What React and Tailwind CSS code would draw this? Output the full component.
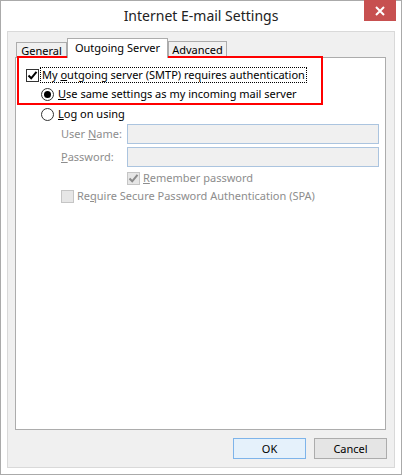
import React from "react";

function Check({ checked, disabled }) {
  return (
    <span
      className={`flex h-[13px] w-[13px] shrink-0 items-center justify-center border ${
        disabled ? "border-[#c5c5c5] bg-[#e6e6e6]" : "border-[#333] bg-white"
      }`}
    >
      {checked && (
        <svg width="11" height="11" viewBox="0 0 11 11">
          <path
            d="M1.5 5.5 L4.2 8.3 L9.5 1.8"
            fill="none"
            stroke={disabled ? "#8a8a8a" : "#000"}
            strokeWidth="2"
          />
        </svg>
      )}
    </span>
  );
}

function Radio({ checked }) {
  return (
    <span className="flex h-[13px] w-[13px] shrink-0 items-center justify-center rounded-full border border-[#333] bg-white">
      {checked && <span className="h-[7px] w-[7px] rounded-full bg-black" />}
    </span>
  );
}

export default function App() {
  return (
    <div className="flex h-[475px] w-[402px] flex-col whitespace-nowrap border border-[#aaaaaa] bg-white font-['Noto_Sans',sans-serif] text-[11px] leading-[16px] text-black">
      {/* title bar */}
      <div className="relative flex h-[30px] shrink-0 items-center justify-center">
        <span className="text-[14px] text-[#222]">Internet E-mail Settings</span>
        <div className="absolute right-[5px] top-[-1px] flex h-[21px] w-[32px] items-center justify-center bg-[#c75050]">
          <svg width="10" height="10" viewBox="0 0 10 10">
            <path d="M1 1 L9 9 M9 1 L1 9" stroke="#fff" strokeWidth="2" />
          </svg>
        </div>
      </div>

      <div className="mx-[6px] mb-[6px] flex flex-1 flex-col border border-[#d9d9d9] bg-[#f0f0f0] pl-[7px] pr-[7px] pt-[6px]">
        {/* tabs */}
        <div className="flex items-end pl-[1px]">
          <div className="h-[15px] w-[51px] border border-b-0 border-[#acacac] bg-[#f0f0f0] text-center leading-[15px]">General</div>
          <div className="relative z-10 -mb-[1px] h-[20px] w-[101px] border border-b-0 border-[#acacac] bg-white text-center leading-[17px]">Outgoing Server</div>
          <div className="h-[16px] w-[59px] border border-b-0 border-[#acacac] bg-[#f0f0f0] text-center leading-[16px]">Advanced</div>
        </div>

        {/* panel */}
        <div className="mr-[1px] flex h-[373px] flex-col border border-[#acacac] bg-white">
          <div className="ml-[1px] -mt-[2px] w-[306px] border-2 border-[#ff0000] pb-[1px] pl-[7px] pt-[9px]">
            <div className="flex h-[16px] items-center gap-[1px]">
              <Check checked />
              <span className="border border-dotted border-black px-[1px] leading-[14px]">
                My <u>o</u>utgoing server (SMTP) requires authentication
              </span>
            </div>
            <div className="mt-[3px] flex h-[16px] items-center gap-[4px] pl-[15px]">
              <Radio checked />
              <span>
                <u>U</u>se same settings as my incoming mail server
              </span>
            </div>
          </div>
          <div className="mt-[1px] flex h-[16px] items-center gap-[4px] pl-[25px]">
            <Radio />
            <span>
              <u>L</u>og on using
            </span>
          </div>
          <div className="mt-[2px] flex items-center pl-[45px] pr-[6px] text-[#8d8d8d]">
            <span className="w-[66px]">
              User <u>N</u>ame:
            </span>
            <div className="h-[20px] flex-1 border border-[#abc4df] bg-[#f0f0f0]" />
          </div>
          <div className="mt-[3px] flex items-center pl-[45px] pr-[6px] text-[#8d8d8d]">
            <span className="w-[66px]">
              <u>P</u>assword:
            </span>
            <div className="h-[20px] flex-1 border border-[#abc4df] bg-[#f0f0f0]" />
          </div>
          <div className="mt-[3px] flex h-[16px] items-center gap-[3px] pl-[111px]">
            <Check checked disabled />
            <span className="text-[#8d8d8d]">
              <u>R</u>emember password
            </span>
          </div>
          <div className="mt-[2px] flex h-[16px] items-center gap-[3px] pl-[45px]">
            <Check disabled />
            <span className="text-[#8d8d8d]">
              Re<u>q</u>uire Secure Password Authentication (SPA)
            </span>
          </div>
        </div>

        {/* buttons */}
        <div className="mt-[8px] flex justify-end gap-[8px]">
          <button className="h-[21px] w-[73px] border border-[#7eb4ea] bg-[#e5f1fb] text-[11px]">OK</button>
          <button className="h-[21px] w-[73px] border border-[#acacac] bg-[#e5e5e5] text-[11px]">Cancel</button>
        </div>
      </div>
    </div>
  );
}
